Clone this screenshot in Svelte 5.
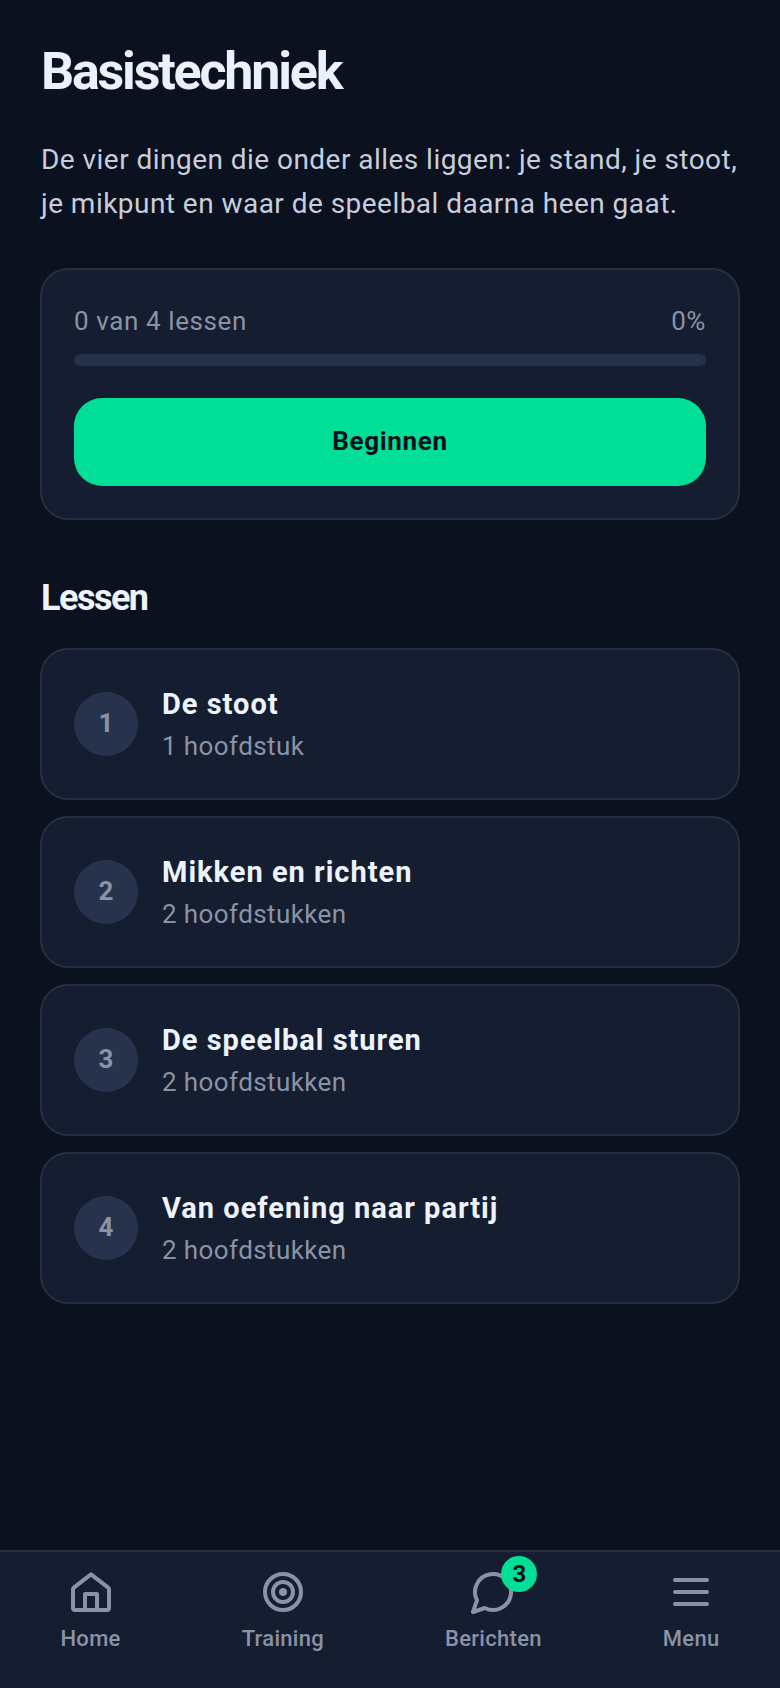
<script lang="ts">
  const lessons = [
    { n: 1, title: 'De stoot', sub: '1 hoofdstuk' },
    { n: 2, title: 'Mikken en richten', sub: '2 hoofdstukken' },
    { n: 3, title: 'De speelbal sturen', sub: '2 hoofdstukken' },
    { n: 4, title: 'Van oefening naar partij', sub: '2 hoofdstukken' }
  ];
</script>

<div class="page">
  <main>
    <h1>Basistechniek</h1>
    <p class="intro">De vier dingen die onder alles liggen: je stand, je stoot, je mikpunt en waar de speelbal daarna heen gaat.</p>

    <section class="progress card">
      <div class="progress-head">
        <span>0 van 4 lessen</span>
        <span>0%</span>
      </div>
      <div class="track"></div>
      <button class="start" type="button">Beginnen</button>
    </section>

    <h2>Lessen</h2>
    <ul class="lessons">
      {#each lessons as l}
        <li class="card lesson">
          <span class="num">{l.n}</span>
          <div class="text">
            <div class="title">{l.title}</div>
            <div class="sub">{l.sub}</div>
          </div>
        </li>
      {/each}
    </ul>
  </main>

  <nav>
    <a href="#home">
      <svg width="48" height="48" viewBox="0 0 24 24" fill="none" stroke="currentColor" stroke-width="2" stroke-linejoin="round" stroke-linecap="round" aria-hidden="true">
        <path d="M12 3.2 20.6 9.8a1 1 0 0 1 .4.8V20a1 1 0 0 1-1 1H4a1 1 0 0 1-1-1v-9.4a1 1 0 0 1 .4-.8Z" />
        <path d="M9 21v-8h6v8" />
      </svg>
      <span>Home</span>
    </a>
    <a href="#training">
      <svg width="48" height="48" viewBox="0 0 24 24" fill="none" stroke="currentColor" stroke-width="2" aria-hidden="true">
        <circle cx="12" cy="12" r="9" />
        <circle cx="12" cy="12" r="5" />
        <circle cx="12" cy="12" r="2" fill="currentColor" stroke="none" />
      </svg>
      <span>Training</span>
    </a>
    <a href="#berichten">
      <span class="icon-wrap">
        <svg width="48" height="48" viewBox="0 0 24 24" fill="none" stroke="currentColor" stroke-width="2" stroke-linejoin="round" stroke-linecap="round" aria-hidden="true">
          <path d="M7.9 20A9 9 0 1 0 4 16.1L2 22Z" />
        </svg>
        <span class="badge">3</span>
      </span>
      <span>Berichten</span>
    </a>
    <a href="#menu">
      <svg width="48" height="48" viewBox="0 0 24 24" fill="none" stroke="currentColor" stroke-width="2" stroke-linecap="round" aria-hidden="true">
        <path d="M4 6h16M4 12h16M4 18h16" />
      </svg>
      <span>Menu</span>
    </a>
  </nav>
</div>

<style>
  :global(body) {
    margin: 0;
    background: #0b111e;
  }

  .page {
    height: 1688px;
    display: flex;
    flex-direction: column;
    font-family: Roboto, "Noto Sans", sans-serif;
    color: #eef3fb;
  }

  main {
    flex: 1;
    padding: 42px 40px 0;
  }

  h1 {
    margin: 0 0 36px;
    padding-left: 1px;
    font-size: 52px;
    line-height: 60px;
    font-weight: 700;
    letter-spacing: -2.2px;
    color: #eaf1fa;
  }

  .intro {
    margin: 0 0 42px;
    padding-left: 1px;
    font-size: 28px;
    line-height: 44px;
    letter-spacing: 0.46px;
    color: #c6cedd;
  }

  .card {
    background: #151e30;
    border: 2px solid #262f42;
    border-radius: 28px;
    box-sizing: border-box;
  }

  .progress {
    padding: 32px;
  }

  .progress-head {
    display: flex;
    justify-content: space-between;
    font-size: 26px;
    line-height: 38px;
    letter-spacing: 0.6px;
    color: #8a92a6;
  }

  .track {
    height: 12px;
    margin-top: 14px;
    background: #25304a;
    border-radius: 6px;
  }

  .start {
    display: block;
    width: 100%;
    height: 88px;
    margin-top: 32px;
    padding: 0 0 2px;
    border: none;
    border-radius: 28px;
    background: #00df95;
    color: #0b111e;
    font: 700 26px Roboto, sans-serif;
    letter-spacing: 0.7px;
  }

  h2 {
    margin: 54px 0 26px;
    padding-left: 1px;
    font-size: 36px;
    line-height: 48px;
    font-weight: 700;
    letter-spacing: -1.5px;
  }

  .lessons {
    list-style: none;
    margin: 0;
    padding: 0;
    display: flex;
    flex-direction: column;
    gap: 16px;
  }

  .lesson {
    height: 152px;
    padding: 0 32px;
    display: flex;
    align-items: center;
    gap: 24px;
  }

  .num {
    width: 64px;
    height: 64px;
    flex-shrink: 0;
    border-radius: 50%;
    background: #27334d;
    color: #8a92a6;
    display: flex;
    align-items: center;
    justify-content: center;
    padding-bottom: 2px;
    box-sizing: border-box;
    font-size: 26px;
    font-weight: 700;
  }

  .text {
    padding-top: 1px;
  }

  .title {
    font-size: 29px;
    line-height: 40px;
    font-weight: 700;
    letter-spacing: 1px;
    color: #eef3fb;
  }

  .sub {
    margin-top: 2px;
    font-size: 26px;
    line-height: 40px;
    letter-spacing: 0.4px;
    color: #8a92a6;
  }

  nav {
    height: 138px;
    box-sizing: border-box;
    border-top: 2px solid #262f42;
    background: #151e30;
    display: flex;
    justify-content: space-around;
    padding-top: 16px;
  }

  nav a {
    display: flex;
    flex-direction: column;
    align-items: center;
    gap: 8px;
    color: #8a92a6;
    text-decoration: none;
    font-size: 22px;
    line-height: 30px;
    font-weight: 500;
    letter-spacing: 0.3px;
  }

  .icon-wrap {
    position: relative;
    display: block;
    height: 48px;
  }

  .badge {
    position: absolute;
    top: -12px;
    right: -20px;
    width: 36px;
    height: 36px;
    border-radius: 50%;
    background: #00df95;
    color: #0b111e;
    display: flex;
    align-items: center;
    justify-content: center;
    font-size: 24px;
    font-weight: 700;
  }
</style>
